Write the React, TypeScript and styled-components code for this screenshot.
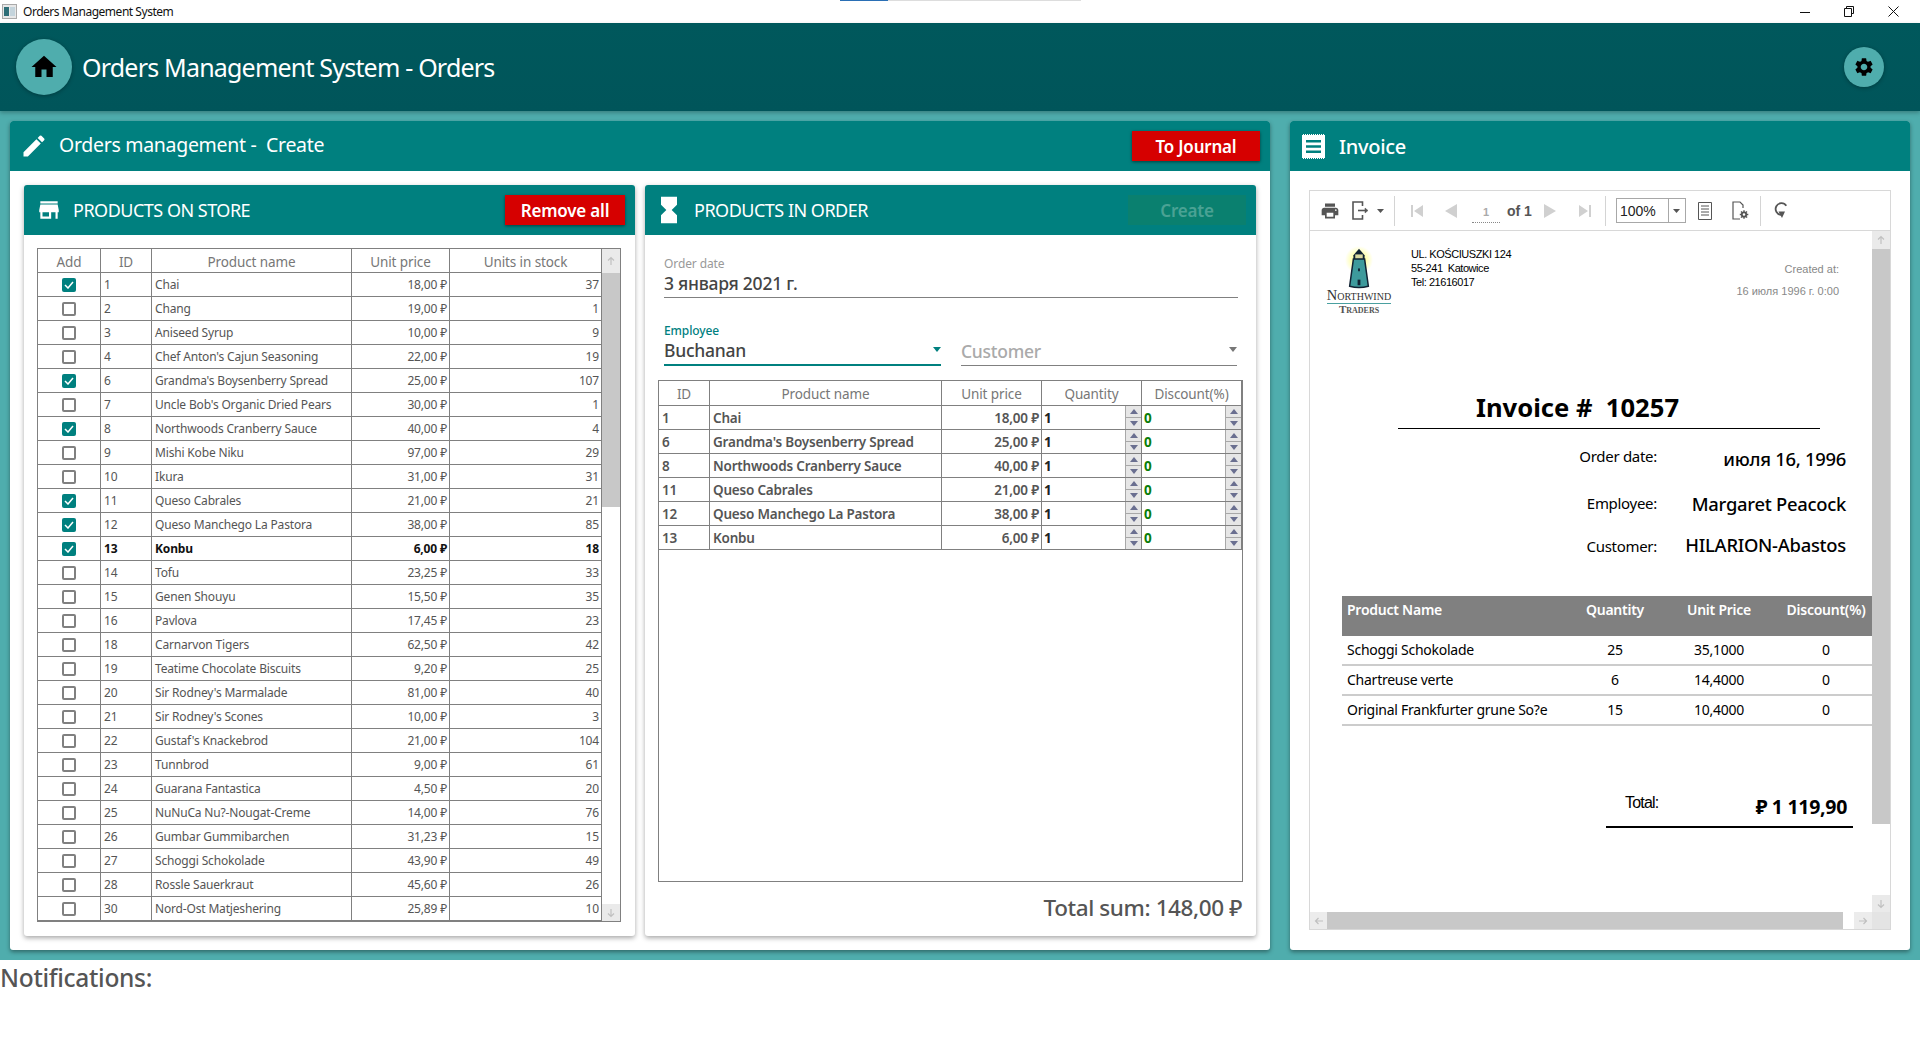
import React from 'react';
import styled, { createGlobalStyle } from 'styled-components';
import { MdEdit, MdHome, MdHourglassFull, MdPrint, MdSettings, MdStore } from 'react-icons/md';

const FONT = `"Noto Sans", "Open Sans", sans-serif`;
const TEAL = '#00807f';
const LINE = '#808080';

const GlobalStyle = createGlobalStyle`
  html, body { margin: 0; padding: 0; background: #fff; }
  body { font-family: ${FONT}; }
  * { box-sizing: border-box; }
`;

// data

type Product = { id: number; name: string; price: string; stock: number; added?: boolean; current?: boolean };

const products: Product[] = [
  { id: 1, name: 'Chai', price: '18,00', stock: 37, added: true },
  { id: 2, name: 'Chang', price: '19,00', stock: 1 },
  { id: 3, name: 'Aniseed Syrup', price: '10,00', stock: 9 },
  { id: 4, name: "Chef Anton's Cajun Seasoning", price: '22,00', stock: 19 },
  { id: 6, name: "Grandma's Boysenberry Spread", price: '25,00', stock: 107, added: true },
  { id: 7, name: "Uncle Bob's Organic Dried Pears", price: '30,00', stock: 1 },
  { id: 8, name: 'Northwoods Cranberry Sauce', price: '40,00', stock: 4, added: true },
  { id: 9, name: 'Mishi Kobe Niku', price: '97,00', stock: 29 },
  { id: 10, name: 'Ikura', price: '31,00', stock: 31 },
  { id: 11, name: 'Queso Cabrales', price: '21,00', stock: 21, added: true },
  { id: 12, name: 'Queso Manchego La Pastora', price: '38,00', stock: 85, added: true },
  { id: 13, name: 'Konbu', price: '6,00', stock: 18, added: true, current: true },
  { id: 14, name: 'Tofu', price: '23,25', stock: 33 },
  { id: 15, name: 'Genen Shouyu', price: '15,50', stock: 35 },
  { id: 16, name: 'Pavlova', price: '17,45', stock: 23 },
  { id: 18, name: 'Carnarvon Tigers', price: '62,50', stock: 42 },
  { id: 19, name: 'Teatime Chocolate Biscuits', price: '9,20', stock: 25 },
  { id: 20, name: "Sir Rodney's Marmalade", price: '81,00', stock: 40 },
  { id: 21, name: "Sir Rodney's Scones", price: '10,00', stock: 3 },
  { id: 22, name: "Gustaf's Knackebrod", price: '21,00', stock: 104 },
  { id: 23, name: 'Tunnbrod', price: '9,00', stock: 61 },
  { id: 24, name: 'Guarana Fantastica', price: '4,50', stock: 20 },
  { id: 25, name: 'NuNuCa Nu?-Nougat-Creme', price: '14,00', stock: 76 },
  { id: 26, name: 'Gumbar Gummibarchen', price: '31,23', stock: 15 },
  { id: 27, name: 'Schoggi Schokolade', price: '43,90', stock: 49 },
  { id: 28, name: 'Rossle Sauerkraut', price: '45,60', stock: 26 },
  { id: 30, name: 'Nord-Ost Matjeshering', price: '25,89', stock: 10 },
];

const invoiceLines = [
  { name: 'Schoggi Schokolade', qty: 25, price: '35,1000' },
  { name: 'Chartreuse verte', qty: 6, price: '14,4000' },
  { name: 'Original Frankfurter grune So?e', qty: 15, price: '10,4000' },
];

// window chrome

const Page = styled.div`
  width: 1920px;
  height: 1038px;
  display: flex;
  flex-direction: column;
  overflow: hidden;
`;

const TitleBar = styled.div`
  height: 23px;
  display: flex;
  align-items: center;
  padding: 0 19px 0 2px;
  font-size: 12px;
  letter-spacing: -0.47px;
  color: #111;
  position: relative;
`;

const TitleText = styled.span`
  margin-left: 6px;
  flex: 1;
`;

const Progress = styled.div`
  position: absolute;
  top: 0;
  left: 840px;
  width: 241px;
  height: 1px;
  background: linear-gradient(to right, #2a6fb5 48px, #ddd 48px);
`;

const WindowButtons = styled.div`
  display: flex;
  align-items: center;
  gap: 34px;
  margin-right: 2px;
`;

const AppHeader = styled.header`
  height: 88px;
  background: linear-gradient(#00585c, #00555a);
  display: flex;
  align-items: center;
  padding: 0 36px 0 16px;
  position: relative;
  z-index: 1;
  box-shadow: 0 2px 4px rgba(0, 0, 0, 0.25);
`;

const RoundButton = styled.div<{ $size: number; $icon: number }>`
  width: ${p => p.$size}px;
  height: ${p => p.$size}px;
  border-radius: 50%;
  background: #4fadad;
  display: flex;
  align-items: center;
  justify-content: center;
  color: #000;
  font-size: ${p => p.$icon}px;
  box-shadow: 0 1px 4px rgba(0, 0, 0, 0.3);
`;

const AppTitle = styled.h1`
  flex: 1;
  margin: 0 0 0 10px;
  font-size: 25px;
  font-weight: 400;
  letter-spacing: -0.8px;
  color: #fff;
`;

const Main = styled.main`
  height: 849px;
  background: #4fadad;
  padding: 10px;
  display: grid;
  grid-template-columns: 1260px 620px;
  gap: 20px;
`;

const Notifications = styled.div`
  font-size: 24.5px;
  font-weight: 500;
  letter-spacing: -0.3px;
  color: #555;
  padding: 1px 0 0 0;
`;

// cards

const Card = styled.section`
  background: #fff;
  border-radius: 3px;
  box-shadow: 0 2px 4px rgba(0, 0, 0, 0.4);
  display: flex;
  flex-direction: column;
  min-height: 0;
`;

const InnerCard = styled(Card)`
  box-shadow: 0 2px 5px rgba(0, 0, 0, 0.35);
`;

const CardHead = styled.div<{ $pad: number }>`
  height: 50px;
  flex: none;
  background: ${TEAL};
  border-radius: 3px 3px 0 0;
  color: #fff;
  display: flex;
  align-items: center;
  padding: 0 10px 0 ${p => p.$pad}px;
`;

const CardTitle = styled.div<{ $gap: number; $size?: number; $weight?: number; $lift?: number }>`
  flex: 1;
  margin-left: ${p => p.$gap}px;
  font-size: ${p => p.$size ?? 19.5}px;
  font-weight: ${p => p.$weight ?? 400};
  letter-spacing: -0.3px;
  white-space: pre;
  padding-bottom: ${p => p.$lift ?? 0}px;
`;

const SectionTitle = styled.div<{ $gap: number }>`
  flex: 1;
  margin-left: ${p => p.$gap}px;
  font-size: 18px;
  letter-spacing: -0.5px;
`;

const RedButton = styled.div<{ $w: number }>`
  width: ${p => p.$w}px;
  height: 30px;
  background: #d60000;
  color: #fff;
  font-size: 17px;
  font-weight: 600;
  letter-spacing: -0.2px;
  display: flex;
  align-items: center;
  justify-content: center;
  box-shadow: 0 1px 3px rgba(0, 0, 0, 0.5);
`;

const DisabledButton = styled.div`
  width: 118px;
  height: 30px;
  background: #0a806f;
  color: #4aa294;
  font-size: 17px;
  font-weight: 600;
  letter-spacing: -0.2px;
  display: flex;
  align-items: center;
  justify-content: center;
`;

const OrdersBody = styled.div`
  flex: 1;
  min-height: 0;
  padding: 14px;
  display: grid;
  grid-template-columns: 611px 611px;
  gap: 10px;
`;

// tables

const GridFrame = styled.div<{ $h: number }>`
  height: ${p => p.$h}px;
  border: 1px solid ${LINE};
  display: flex;
  overflow: hidden;
  flex: none;
`;

const GridTable = styled.table`
  border-collapse: separate;
  border-spacing: 0;
  table-layout: fixed;
  align-self: flex-start;
  width: 100%;
`;

const Th = styled.th<{ $h?: number }>`
  height: ${p => p.$h ?? 24}px;
  padding: 2px 0 0;
  border-right: 1px solid ${LINE};
  border-bottom: 1px solid ${LINE};
  font-size: 13.5px;
  font-weight: 400;
  letter-spacing: -0.1px;
  color: #777;
`;

const Td = styled.td<{ $align?: string; $strong?: boolean; $semi?: boolean }>`
  height: 24px;
  padding: 0 ${p => (p.$align === 'right' ? 2 : 3)}px 0 3px;
  border-right: 1px solid ${LINE};
  border-bottom: 1px solid ${LINE};
  font-size: ${p => (p.$semi ? 13.5 : 12)}px;
  font-weight: ${p => (p.$strong ? 700 : p.$semi ? 600 : 400)};
  letter-spacing: ${p => (p.$semi ? -0.2 : -0.17)}px;
  text-align: ${p => p.$align ?? 'left'};
  color: ${p => (p.$strong ? '#111' : '#555')};
  white-space: nowrap;
  overflow: hidden;
`;

const CheckCell = styled(Td)`
  padding: 0;
`;

const Check = styled.span<{ $on?: boolean }>`
  width: 14px;
  height: 14px;
  margin: 1px auto 0;
  display: flex;
  align-items: center;
  justify-content: center;
  border-radius: 2px;
  border: ${p => (p.$on ? 'none' : '2px solid #808080')};
  background: ${p => (p.$on ? TEAL : '#fff')};
`;

const SpinCell = styled(Td)`
  padding: 0;
`;

const SpinBox = styled.div<{ $green?: boolean }>`
  height: 23px;
  display: flex;
  align-items: center;
  justify-content: space-between;
  padding-left: 2px;
  font-size: 13.5px;
  font-weight: 700;
  color: ${p => (p.$green ? '#0a7d0a' : '#222')};
`;

const SpinButtons = styled.div`
  width: 16px;
  height: 23px;
  display: flex;
  flex-direction: column;
  gap: 1px;
  padding: 0 0 0 1px;
  background: #a8a8a8;
`;

const SpinArrow = styled.div`
  flex: 1;
  background: #e6e6e6;
  display: flex;
  align-items: center;
  justify-content: center;
`;

const VBar = styled.div<{ $w: number }>`
  width: ${p => p.$w}px;
  flex: none;
  display: flex;
  flex-direction: column;
  background: #fff;
`;

const BarButton = styled.div<{ $h: number }>`
  height: ${p => p.$h}px;
  flex: none;
  background: #eaeaea;
  display: flex;
  align-items: center;
  justify-content: center;
`;

const BarThumb = styled.div<{ $h: number }>`
  height: ${p => p.$h}px;
  flex: none;
  background: #c8c8c8;
`;

const BarFill = styled.div`
  flex: 1;
`;

const StoreBody = styled.div`
  padding: 13px 14px 0 13px;
`;

// order form

const OrderBody = styled.div`
  flex: 1;
  min-height: 0;
  padding: 21px 13px 0;
  display: flex;
  flex-direction: column;
`;

const Field = styled.div<{ $active?: boolean }>`
  border-bottom: ${p => (p.$active ? `2px solid ${TEAL}` : `1px solid ${LINE}`)};
  position: relative;
`;

const FieldLabel = styled.div<{ $active?: boolean }>`
  font-size: 12px;
  line-height: 15px;
  letter-spacing: -0.1px;
  font-weight: ${p => (p.$active ? 500 : 400)};
  color: ${p => (p.$active ? TEAL : '#999')};
`;

const FieldValue = styled.div<{ $muted?: boolean }>`
  font-size: 17.5px;
  line-height: 24px;
  letter-spacing: -0.25px;
  font-weight: 500;
  color: ${p => (p.$muted ? '#aaa' : '#444')};
`;

const DateField = styled(Field)`
  margin: 0 5px 0 6px;
  height: 42px;
`;

const ComboRow = styled.div`
  display: grid;
  grid-template-columns: 277px 276px;
  gap: 20px;
  margin: 25px 0 14px 6px;
`;

const ComboField = styled(Field)`
  height: 43px;
  padding-bottom: 2px;
  display: flex;
  flex-direction: column;
  justify-content: flex-end;
`;

const Caret = styled.span<{ $color: string }>`
  position: absolute;
  right: 0;
  top: 24px;
  border-left: 4px solid transparent;
  border-right: 4px solid transparent;
  border-top: 5px solid ${p => p.$color};
`;

const TotalSum = styled.div`
  flex: 1;
  display: flex;
  align-items: center;
  justify-content: flex-end;
  padding: 0 1px 4px 0;
  font-size: 22.5px;
  font-weight: 500;
  letter-spacing: -0.4px;
  color: #555;
`;

// report viewer

const InvoiceBody = styled.div`
  flex: 1;
  min-height: 0;
  padding: 19px 19px 20px;
`;

const Viewer = styled.div`
  height: 740px;
  border: 1px solid #d8d8d8;
  display: flex;
  flex-direction: column;
`;

const Toolbar = styled.div`
  height: 40px;
  flex: none;
  border-bottom: 1px solid #d8d8d8;
  display: flex;
  align-items: center;
  padding-left: 10px;
  color: #555;
`;

const Tool = styled.span<{ $ml: number; $color?: string }>`
  margin-left: ${p => p.$ml}px;
  display: flex;
  align-items: center;
  color: ${p => p.$color ?? '#555'};
  flex: none;
`;

const ToolSep = styled.span<{ $ml: number }>`
  width: 1px;
  height: 30px;
  margin-left: ${p => p.$ml}px;
  background: #d4d4d4;
  flex: none;
`;

const PageBox = styled.span`
  width: 28px;
  margin-left: 15px;
  height: 22px;
  padding-top: 5px;
  border-bottom: 1px dotted #888;
  font-family: "Liberation Sans", sans-serif;
  font-size: 11px;
  font-weight: 700;
  color: #aaa;
  text-align: center;
  align-self: flex-end;
  margin-bottom: 7px;
`;

const PageCount = styled.span`
  margin-left: 7px;
  font-family: "Liberation Sans", sans-serif;
  font-size: 14px;
  font-weight: 700;
  color: #555;
`;

const ZoomBox = styled.div`
  width: 70px;
  height: 25px;
  margin-left: 10px;
  border: 1px solid #a8a8a8;
  display: flex;
  flex: none;
  align-items: center;
  font-family: "Liberation Sans", sans-serif;
  font-size: 14px;
  color: #222;
`;

const ZoomValue = styled.span`
  flex: 1;
  padding-left: 3px;
`;

const ZoomArrow = styled.span`
  width: 17px;
  height: 100%;
  border-left: 1px solid #a8a8a8;
  display: flex;
  align-items: center;
  justify-content: center;
`;

const ViewerMiddle = styled.div`
  flex: 1;
  min-height: 0;
  display: flex;
`;

const Doc = styled.div`
  flex: 1;
  min-width: 0;
  color: #000;
  overflow: hidden;
`;

const DocHead = styled.div`
  height: 156px;
  padding: 15px 33px 0 15px;
  display: flex;
`;

const Address = styled.div`
  margin-left: 18px;
  padding-top: 1px;
  flex: 1;
  font-family: "Liberation Sans", sans-serif;
  font-size: 11px;
  line-height: 14px;
  letter-spacing: -0.45px;
`;

const Created = styled.div`
  font-family: "Liberation Sans", sans-serif;
  font-size: 11px;
  line-height: 22px;
  color: #888;
  text-align: right;
  padding-top: 12px;
`;

const InvoiceTitle = styled.div`
  margin-left: 88px;
  width: 422px;
  height: 42px;
  padding-left: 78px;
  border-bottom: 1px solid #000;
  font-size: 25.6px;
  line-height: 42px;
  font-weight: 700;
  white-space: pre;
`;

const InfoRow = styled.div<{ $top: number }>`
  display: grid;
  grid-template-columns: 347px 189px;
  align-items: center;
  height: 30px;
  margin-top: ${p => p.$top}px;
`;

const InfoLabel = styled.div`
  text-align: right;
  font-size: 15px;
  letter-spacing: -0.3px;
`;

const InfoValue = styled.div<{ $dy?: number }>`
  text-align: right;
  font-size: 18.4px;
  font-weight: 500;
  letter-spacing: -0.27px;
  white-space: nowrap;
  margin-top: ${p => Math.max(p.$dy ?? 0, 0) * 2}px;
  margin-bottom: ${p => Math.max(-(p.$dy ?? 0), 0) * 2}px;
`;

const LinesGrid = styled.div`
  margin: 35px 0 0 32px;
`;

const LineRow = styled.div<{ $head?: boolean }>`
  display: grid;
  grid-template-columns: 231px 74px 134px 80px;
  align-items: ${p => (p.$head ? 'start' : 'center')};
  height: ${p => (p.$head ? 40 : 30)}px;
  padding: ${p => (p.$head ? '4px 0 0 5px' : '0 0 2px 5px')};
  background: ${p => (p.$head ? '#808080' : '#fff')};
  color: ${p => (p.$head ? '#fff' : '#000')};
  border-bottom: ${p => (p.$head ? 'none' : '2px solid #ccc')};
  font-size: 14px;
  font-weight: ${p => (p.$head ? 600 : 400)};
  letter-spacing: -0.25px;
  white-space: nowrap;
`;

const LineCell = styled.div`
  text-align: center;
`;

const DocTotal = styled.div`
  margin: 60px 0 0 296px;
  width: 247px;
  height: 42px;
  border-bottom: 2px solid #000;
  padding: 0 6px 0 19px;
  display: flex;
  justify-content: space-between;
  align-items: center;
`;

const TotalLabel = styled.span`
  font-family: "Liberation Sans", sans-serif;
  font-size: 16px;
  letter-spacing: -0.8px;
  margin-top: -6px;
`;

const TotalValue = styled.span`
  font-size: 19.5px;
  font-weight: 700;
  letter-spacing: -0.3px;
`;

const HBar = styled.div`
  height: 17px;
  flex: none;
  display: flex;
`;

const HThumb = styled.div`
  width: 516px;
  background: #c8c8c8;
  flex: none;
`;

const Corner = styled.div`
  width: 18px;
  background: #e4e4e4;
  flex: none;
`;

const HFill = styled.div`
  flex: 1;
`;

const BarEnd = styled(BarButton)`
  width: 17px;
  background: #ececec;
`;

const BarEndRight = styled(BarEnd)`
  width: 18px;
  margin-left: 0;
`;

// small drawings

const Arrow = ({ dir }: { dir: 'up' | 'down' | 'left' | 'right' }) => {
  const rotate = { up: 0, right: 90, down: 180, left: 270 }[dir];
  return (
    <svg width="10" height="10" viewBox="0 0 10 10" style={{ transform: `rotate(${rotate}deg)` }}>
      <path d="M5 9V1.5M2 4.5L5 1.5L8 4.5" fill="none" stroke="#c0c0c0" strokeWidth="1.2" />
    </svg>
  );
};

const SpinGlyph = ({ down }: { down?: boolean }) => (
  <svg width="8" height="5" viewBox="0 0 8 5">
    <path d={down ? 'M0 0H8L4 5Z' : 'M4 0L8 5H0Z'} fill="#6a6f90" />
  </svg>
);

const Spinner = ({ value, green }: { value: number; green?: boolean }) => (
  <SpinBox $green={green}>
    {value}
    <SpinButtons>
      <SpinArrow><SpinGlyph /></SpinArrow>
      <SpinArrow><SpinGlyph down /></SpinArrow>
    </SpinButtons>
  </SpinBox>
);

const AppIcon = () => (
  <svg width="15" height="15" viewBox="0 0 15 15">
    <rect x="0.5" y="0.5" width="14" height="14" fill="#e8e8e8" stroke="#aaa" />
    <rect x="2" y="3" width="5" height="9" fill="#2f6f78" />
    <rect x="8" y="3" width="5" height="9" fill="#c4d4dc" />
  </svg>
);

const ReceiptIcon = () => (
  <svg width="23" height="25" viewBox="0 0 23 25" fill="#fff">
    <path d="M0 0h23v25H0z" />
    <path d="M4 6h15v2.6H4zM4 11.2h15v2.6H4zM4 16.4h15V19H4z" fill={TEAL} />
    <path d="M0 .5h23M0 24.5h23" stroke={TEAL} strokeDasharray="1 1" />
  </svg>
);

const ExportIcon = () => (
  <svg width="17" height="19" viewBox="0 0 17 19" fill="none" stroke="#555" strokeWidth="1.6">
    <path d="M10.5 5V1H1v17h9.5v-4" />
    <path d="M6 9.5h8" />
    <path d="M13 7l3 2.5L13 12z" fill="#555" strokeWidth="0.5" />
  </svg>
);

const Tri = ({ color = '#555', w = 7, h = 4 }: { color?: string; w?: number; h?: number }) => (
  <svg width={w} height={h} viewBox="0 0 7 4"><path d="M0 0h7L3.5 4z" fill={color} /></svg>
);

const NavIcon = ({ dir, edge }: { dir: 'left' | 'right'; edge?: boolean }) => (
  <svg width="12" height="14" viewBox="0 0 12 14" fill="#d0d0d0">
    {dir === 'left'
      ? <path d={edge ? 'M12 1v12L3 7zM0 1h2v12H0z' : 'M12 0v14L0 7z'} />
      : <path d={edge ? 'M0 1v12l9-6zM10 1h2v12h-2z' : 'M0 0v14l12-7z'} />}
  </svg>
);

const PageIcon = () => (
  <svg width="14" height="18" viewBox="0 0 14 18" fill="none" stroke="#555">
    <path d="M.5.5h13v17H.5zM3 4h8M3 7h8M3 10h8M3 13h8" />
  </svg>
);

const PageGearIcon = () => (
  <svg width="17" height="19" viewBox="0 0 17 19" fill="none" stroke="#555" strokeWidth="1.2">
    <path d="M8 18H1V1h7l3 3v3" />
    <circle cx="12" cy="13.5" r="2.2" strokeWidth="1.8" />
    <path d="M12 9.3v1.6M12 16v1.7M7.8 13.5h1.6M14.6 13.5h1.7M9 10.5l1.1 1.1M14 15.5l1.1 1.1M15 10.5l-1.1 1.1M10 15.5L9 16.6" strokeWidth="1.4" />
  </svg>
);

const RefreshIcon = () => (
  <svg width="15" height="17" viewBox="0 0 15 17" fill="none" stroke="#555" strokeWidth="1.8">
    <path d="M12.3 3.8A5.8 5.8 0 1 0 7.5 12.8" />
    <path d="M4.5 9.5h6.5l-3 6.5z" fill="#555" stroke="none" />
  </svg>
);

const LogoBox = styled.div`
  width: 68px;
  flex: none;
  display: flex;
  flex-direction: column;
  align-items: center;
  font-family: "Liberation Serif", serif;
  color: #333;
`;

const LogoName = styled.div`
  font-size: 14.5px;
  line-height: 12px;
  font-variant: small-caps;
  border-bottom: 1px solid #4aa0a0;
  padding-bottom: 2px;
  white-space: nowrap;
`;

const LogoSub = styled.div`
  font-size: 11px;
  line-height: 11px;
  font-variant: small-caps;
  font-weight: 700;
  color: #555;
`;

const Lighthouse = () => (
  <svg width="34" height="43" viewBox="0 0 36 46">
    <defs>
      <radialGradient id="glow" cx="50%" cy="50%" r="50%">
        <stop offset="0%" stopColor="#ffff60" />
        <stop offset="100%" stopColor="#ffffff" />
      </radialGradient>
    </defs>
    <circle cx="18" cy="15" r="15" fill="url(#glow)" />
    <path d="M18 3l6 7v4h-12v-4z" fill="#123" />
    <rect x="14" y="9" width="8" height="5" fill="#d8d8a0" />
    <path d="M12 14h12l4 29q-10 3-20 0z" fill="#3d9a9c" stroke="#123" strokeWidth="1.6" />
    <rect x="16.5" y="36" width="3" height="6" fill="#123" />
    <rect x="17" y="24" width="2" height="3" fill="#123" />
  </svg>
);

const App: React.FC = () => (
  <Page>
    <GlobalStyle />
    <TitleBar>
      <AppIcon />
      <TitleText>Orders Management System</TitleText>
      <Progress />
      <WindowButtons>
        <svg width="10" height="10" viewBox="0 0 10 10"><path d="M0 5.5h10" stroke="#111" /></svg>
        <svg width="10" height="11" viewBox="0 0 10 11" fill="none" stroke="#111"><path d="M2.5 2.5V.5h7v7h-2M.5 2.5h7v8h-7z" /></svg>
        <svg width="11" height="11" viewBox="0 0 11 11"><path d="M.5.5l10 10M10.5.5l-10 10" stroke="#111" /></svg>
      </WindowButtons>
    </TitleBar>

    <AppHeader>
      <RoundButton $size={56} $icon={30}><MdHome /></RoundButton>
      <AppTitle>Orders Management System - Orders</AppTitle>
      <RoundButton $size={40} $icon={22}><MdSettings /></RoundButton>
    </AppHeader>

    <Main>
      <Card>
        <CardHead $pad={10}>
          <MdEdit size={28} />
          <CardTitle $gap={11} $lift={3}>{'Orders management -  Create'}</CardTitle>
          <RedButton $w={128}>To Journal</RedButton>
        </CardHead>
        <OrdersBody>
          <InnerCard>
            <CardHead $pad={12}>
              <MdStore size={26} />
              <SectionTitle $gap={11}>PRODUCTS ON STORE</SectionTitle>
              <RedButton $w={120}>Remove all</RedButton>
            </CardHead>
            <StoreBody>
              <GridFrame $h={674}>
                <GridTable>
                  <colgroup>
                    <col style={{ width: 63 }} />
                    <col style={{ width: 51 }} />
                    <col style={{ width: 200 }} />
                    <col style={{ width: 98 }} />
                    <col />
                  </colgroup>
                  <thead>
                    <tr>
                      <Th>Add</Th><Th>ID</Th><Th>Product name</Th><Th>Unit price</Th><Th>Units in stock</Th>
                    </tr>
                  </thead>
                  <tbody>
                    {products.map(p => (
                      <tr key={p.id}>
                        <CheckCell>
                          <Check $on={p.added}>
                            {p.added && (
                              <svg width="10" height="8" viewBox="0 0 10 8">
                                <path d="M1 4l3 3 5-6" fill="none" stroke="#fff" strokeWidth="1.5" />
                              </svg>
                            )}
                          </Check>
                        </CheckCell>
                        <Td $strong={p.current}>{p.id}</Td>
                        <Td $strong={p.current}>{p.name}</Td>
                        <Td $strong={p.current} $align="right">{p.price} ₽</Td>
                        <Td $strong={p.current} $align="right">{p.stock}</Td>
                      </tr>
                    ))}
                    <tr><Td /><Td /><Td /><Td /><Td /></tr>
                  </tbody>
                </GridTable>
                <VBar $w={18}>
                  <BarButton $h={24}><Arrow dir="up" /></BarButton>
                  <BarThumb $h={234} />
                  <BarFill />
                  <BarButton $h={17}><Arrow dir="down" /></BarButton>
                </VBar>
              </GridFrame>
            </StoreBody>
          </InnerCard>

          <InnerCard>
            <CardHead $pad={8}>
              <MdHourglassFull size={32} />
              <SectionTitle $gap={9}>PRODUCTS IN ORDER</SectionTitle>
              <DisabledButton>Create</DisabledButton>
            </CardHead>
            <OrderBody>
              <DateField>
                <FieldLabel>Order date</FieldLabel>
                <FieldValue>3 января 2021 г.</FieldValue>
              </DateField>
              <ComboRow>
                <ComboField $active>
                  <FieldLabel $active>Employee</FieldLabel>
                  <FieldValue>Buchanan</FieldValue>
                  <Caret $color={TEAL} />
                </ComboField>
                <ComboField>
                  <FieldValue $muted>Customer</FieldValue>
                  <Caret $color="#777" />
                </ComboField>
              </ComboRow>
              <GridFrame $h={502}>
                <GridTable>
                  <colgroup>
                    <col style={{ width: 51 }} />
                    <col style={{ width: 232 }} />
                    <col style={{ width: 100 }} />
                    <col style={{ width: 100 }} />
                    <col />
                  </colgroup>
                  <thead>
                    <tr>
                      <Th $h={25}>ID</Th><Th $h={25}>Product name</Th><Th $h={25}>Unit price</Th><Th $h={25}>Quantity</Th><Th $h={25}>Discount(%)</Th>
                    </tr>
                  </thead>
                  <tbody>
                    {products.filter(p => p.added).map(p => (
                      <tr key={p.id}>
                        <Td $semi>{p.id}</Td>
                        <Td $semi>{p.name}</Td>
                        <Td $semi $align="right">{p.price} ₽</Td>
                        <SpinCell><Spinner value={1} /></SpinCell>
                        <SpinCell><Spinner value={0} green /></SpinCell>
                      </tr>
                    ))}
                  </tbody>
                </GridTable>
              </GridFrame>
              <TotalSum>Total sum: 148,00 ₽</TotalSum>
            </OrderBody>
          </InnerCard>
        </OrdersBody>
      </Card>

      <Card>
        <CardHead $pad={12}>
          <ReceiptIcon />
          <CardTitle $gap={14} $size={20} $weight={500}>Invoice</CardTitle>
        </CardHead>
        <InvoiceBody>
          <Viewer>
            <Toolbar>
              <Tool $ml={0}><MdPrint size={20} /></Tool>
              <Tool $ml={12}><ExportIcon /></Tool>
              <Tool $ml={8}><Tri /></Tool>
              <ToolSep $ml={10} />
              <Tool $ml={16}><NavIcon dir="left" edge /></Tool>
              <Tool $ml={22}><NavIcon dir="left" /></Tool>
              <PageBox>1</PageBox>
              <PageCount>of 1</PageCount>
              <Tool $ml={12}><NavIcon dir="right" /></Tool>
              <Tool $ml={23}><NavIcon dir="right" edge /></Tool>
              <ToolSep $ml={14} />
              <ZoomBox>
                <ZoomValue>100%</ZoomValue>
                <ZoomArrow><Tri /></ZoomArrow>
              </ZoomBox>
              <Tool $ml={12}><PageIcon /></Tool>
              <Tool $ml={20}><PageGearIcon /></Tool>
              <ToolSep $ml={11} />
              <Tool $ml={13}><RefreshIcon /></Tool>
            </Toolbar>
            <ViewerMiddle>
              <Doc>
                <DocHead>
                  <LogoBox>
                    <Lighthouse />
                    <LogoName>Northwind</LogoName>
                    <LogoSub>Traders</LogoSub>
                  </LogoBox>
                  <Address>
                    UL. KOŚCIUSZKI 124<br />
                    55-241&nbsp;&nbsp;Katowice<br />
                    Tel: 21616017
                  </Address>
                  <Created>
                    Created at:<br />
                    16 июля 1996 г. 0:00
                  </Created>
                </DocHead>
                <InvoiceTitle>{'Invoice #  10257'}</InvoiceTitle>
                <InfoRow $top={12}><InfoLabel>Order date:</InfoLabel><InfoValue $dy={2}>июля 16, 1996</InfoValue></InfoRow>
                <InfoRow $top={17}><InfoLabel>Employee:</InfoLabel><InfoValue>Margaret Peacock</InfoValue></InfoRow>
                <InfoRow $top={13}><InfoLabel>Customer:</InfoLabel><InfoValue $dy={-2}>HILARION-Abastos</InfoValue></InfoRow>
                <LinesGrid>
                  <LineRow $head>
                    <div>Product Name</div>
                    <LineCell>Quantity</LineCell>
                    <LineCell>Unit Price</LineCell>
                    <LineCell>Discount(%)</LineCell>
                  </LineRow>
                  {invoiceLines.map(l => (
                    <LineRow key={l.name}>
                      <div>{l.name}</div>
                      <LineCell>{l.qty}</LineCell>
                      <LineCell>{l.price}</LineCell>
                      <LineCell>0</LineCell>
                    </LineRow>
                  ))}
                </LinesGrid>
                <DocTotal>
                  <TotalLabel>Total:</TotalLabel>
                  <TotalValue>₽ 1 119,90</TotalValue>
                </DocTotal>
              </Doc>
              <VBar $w={18}>
                <BarButton $h={18}><Arrow dir="up" /></BarButton>
                <BarThumb $h={575} />
                <BarFill />
                <BarButton $h={17}><Arrow dir="down" /></BarButton>
              </VBar>
            </ViewerMiddle>
            <HBar>
              <BarEnd $h={17}><Arrow dir="left" /></BarEnd>
              <HThumb />
              <HFill />
              <BarEndRight $h={17}><Arrow dir="right" /></BarEndRight>
              <Corner />
            </HBar>
          </Viewer>
        </InvoiceBody>
      </Card>
    </Main>

    <Notifications>Notifications:</Notifications>
  </Page>
);

export default App;
